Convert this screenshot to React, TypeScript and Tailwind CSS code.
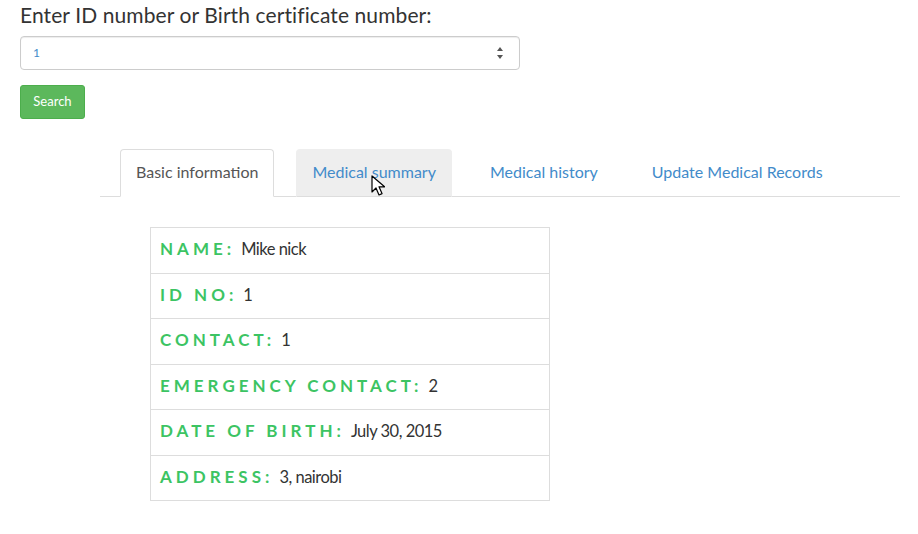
import { useState } from "react"

const tabs = ["Basic information", "Medical summary", "Medical history", "Update Medical Records"]

const rows = [
  { label: "Name:", value: "Mike nick" },
  { label: "ID No:", value: "1" },
  { label: "Contact:", value: "1" },
  { label: "Emergency contact:", value: "2" },
  { label: "Date of birth:", value: "July 30, 2015" },
  { label: "Address:", value: "3, nairobi" },
]

export default function App() {
  const [active] = useState(0)

  return (
    <div className="min-h-[534px] bg-white font-['Lato',sans-serif] text-[#333]">
      <div className="px-5 pt-[2px]">
        <h3 className="text-[21px] leading-[25px] tracking-[0.1px] text-[#333]">Enter ID number or Birth certificate number:</h3>

        {/* champ numérique */}
        <div className="mt-[9px] flex h-[34px] w-[500px] items-center justify-between rounded border border-[#ccc] pl-3 pr-[16px] shadow-[inset_0_1px_1px_rgba(0,0,0,0.075)]">
          <span className="text-[12px] text-[#428bca]">1</span>
          <div className="flex flex-col items-center gap-[4px] text-[#555]">
            <svg width="6" height="4" viewBox="0 0 6 4"><path d="M3 0 6 4H0z" fill="currentColor" /></svg>
            <svg width="6" height="4" viewBox="0 0 6 4"><path d="M0 0h6L3 4z" fill="currentColor" /></svg>
          </div>
        </div>

        <button className="mt-[15px] h-[34px] w-[65px] rounded-[3px] border border-[#4cae4c] bg-[#5cb85c] text-[13px] text-white">
          Search
        </button>
      </div>

      {/* onglets */}
      <div className="relative ml-[100px] mt-[30px] w-[800px]">
        <ul className="flex border-b border-[#ddd] pl-5">
          {tabs.map((t, i) => {
            const isActive = i === active
            return (
              <li
                key={t}
                className={`-mb-px mr-[22px] h-[48px] rounded-t border px-[15px] pt-[11px] text-[16px] leading-[22px] ${
                  isActive
                    ? "border-[#ddd] border-b-white bg-white text-[#555]"
                    : i === 1
                      ? "border-[#eee] border-b-[#ddd] bg-[#eee] text-[#428bca]"
                      : "border-transparent text-[#428bca]"
                }`}
              >
                {t}
              </li>
            )
          })}
        </ul>

        {/* curseur souris */}
        <svg className="absolute left-[271px] top-[26px]" width="14" height="22" viewBox="0 0 14 22">
          <path d="M1 1v16l4-4 3 7 3-1.4-3-6.8h5.6z" fill="#fff" stroke="#000" strokeWidth="1.2" strokeLinejoin="round" />
        </svg>

        {/* tableau d'infos */}
        <table className="ml-[50px] mt-[30px] w-[400px] border-collapse">
          <tbody>
            {rows.map((r) => (
              <tr key={r.label} className="h-[45.5px] border border-[#ddd]">
                <td className="px-[9px] pb-[2px] text-[17px]">
                  <span className="mr-[6px] font-bold uppercase tracking-[4px] text-[#3cc463]">{r.label}</span>
                  <span className="text-[16.5px] tracking-[-0.5px] text-[#333]">{r.value}</span>
                </td>
              </tr>
            ))}
          </tbody>
        </table>
      </div>
    </div>
  )
}
